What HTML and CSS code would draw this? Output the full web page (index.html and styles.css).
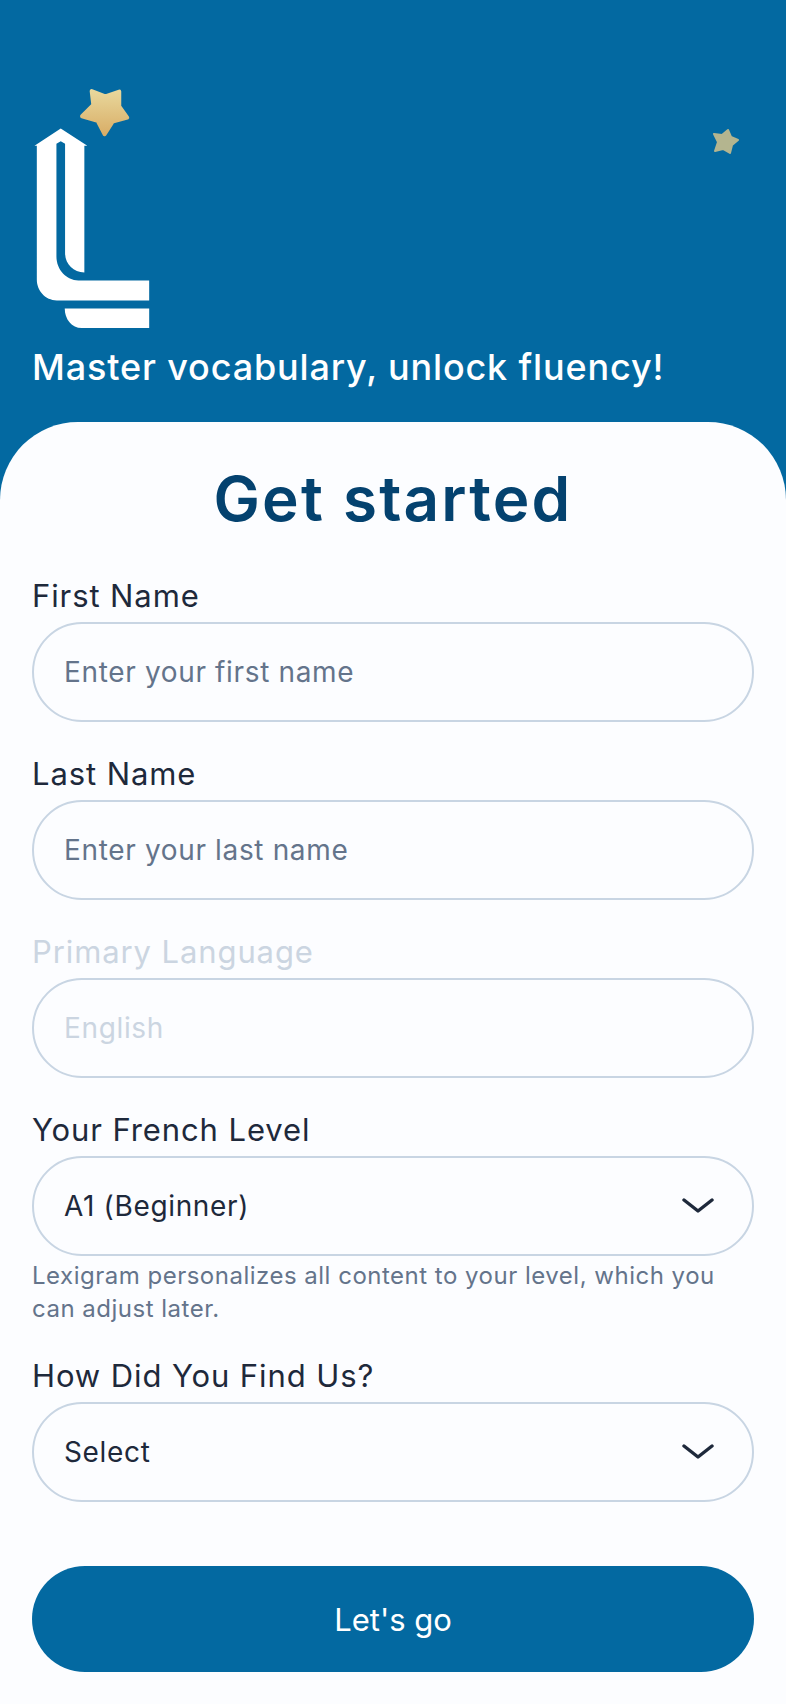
FILE: index.html
```html
<!DOCTYPE html>
<html lang="en">
<head>
  <meta charset="UTF-8" />
  <meta name="viewport" content="width=device-width, initial-scale=1.0"/>
  <title>Lexigram - Get started</title>
  <link rel="stylesheet" href="styles.css">
</head>
<body>

  <!-- Hero -->
  <header class="hero">
    <svg class="star-small" viewBox="0 0 30 30" aria-hidden="true">
      <path d="M17 3 L20 10 L27 13 L21 18 L19 26 L12 22 L4 24 L7 15 L3 7 L11 8 Z" fill="#b4b58f" stroke="#b4b58f" stroke-width="2" stroke-linejoin="round"/>
    </svg>
    <svg class="logo" viewBox="100 80 352 728" aria-hidden="true">
      <defs>
        <linearGradient id="gold" x1="0" y1="0" x2="0" y2="1">
          <stop offset="0" stop-color="#e8d79b"/>
          <stop offset="1" stop-color="#d9ae68"/>
        </linearGradient>
      </defs>
      <path d="M275 92 L316 108 L358 94 L358 138 L382 172 L338 184 L314 222 L293 182 L246 168 L280 134 Z" fill="url(#gold)" stroke="url(#gold)" stroke-width="12" stroke-linejoin="round"/>
      <path fill="#fff" d="M182 205 L262 257 H253 V638 C220 638 195 612 195 580 V251 L182 243 L169 251 V590 C169 630 200 662 235 662 H448 V722 H170 C135 722 110 692 110 660 V257 H103 Z"/>
      <path fill="#fff" d="M194 746 H448 V805 H245 C215 805 194 778 194 746 Z"/>
    </svg>
    <p class="tagline">Master vocabulary, unlock fluency!</p>
  </header>

  <!-- Sign up form -->
  <main class="sheet">
    <h1>Get started</h1>
    <form class="signup">
      <div class="field">
        <label for="firstName">First Name</label>
        <input id="firstName" type="text" placeholder="Enter your first name" />
      </div>
      <div class="field">
        <label for="lastName">Last Name</label>
        <input id="lastName" type="text" placeholder="Enter your last name" />
      </div>
      <div class="field is-disabled">
        <label for="language">Primary Language</label>
        <input id="language" type="text" value="English" disabled />
      </div>
      <div class="field">
        <label>Your French Level</label>
        <div class="select">
          <span>A1 (Beginner)</span>
          <svg viewBox="0 0 32 18" aria-hidden="true"><path d="M2 3 L16 14 L30 3"/></svg>
        </div>
        <p class="hint">Lexigram personalizes all content to your level, which you can adjust later.</p>
      </div>
      <div class="field">
        <label>How Did You Find Us?</label>
        <div class="select">
          <span>Select</span>
          <svg viewBox="0 0 32 18" aria-hidden="true"><path d="M2 3 L16 14 L30 3"/></svg>
        </div>
      </div>
      <button type="submit">Let's go</button>
    </form>
  </main>

</body>
</html>
```

FILE: styles.css
```css
* { box-sizing: border-box; }
html, body { margin: 0; }
body { font-family: "Inter", "Noto Sans", sans-serif; background: #0369a1; width: 786px; height: 1704px; overflow: hidden; }

.hero { position: relative; height: 422px; padding: 87px 32px 0; color: #fff; }
.logo { display: block; width: 118px; height: 242px; margin-left: 1px; }
.star-small { position: absolute; left: 711px; top: 127px; width: 30px; height: 30px; }
.tagline { margin: 17px 0 0; font-size: 36px; line-height: 42px; font-weight: 500; letter-spacing: 0.85px; white-space: nowrap; }

.sheet { height: 1282px; padding: 0 32px; background: #fcfdff; border-radius: 78px 78px 0 0; }
h1 { margin: 0; padding-top: 41px; height: 150px; text-align: center; color: #04426f; font-size: 62px; line-height: 72px; font-weight: 600; letter-spacing: 2.2px; }

.signup { display: flex; flex-direction: column; }
.field { display: flex; flex-direction: column; margin-bottom: 28px; }
.field label { height: 50px; padding-top: 6px; font-size: 31px; line-height: 36px; letter-spacing: 0.9px; color: #1e293b; }
.field input, .select { width: 100%; height: 100px; padding: 0 30px; border: 2px solid #c8d5e3; border-radius: 50px; background: transparent; font: inherit; font-size: 28px; letter-spacing: 0.65px; color: #1e293b; outline: none; }
.field input::placeholder { color: #64748b; opacity: 1; }
.is-disabled label { color: #cbd5e1; }
.field input:disabled { color: #cbd5e1; }
.select { display: flex; align-items: center; justify-content: space-between; }
.select svg { width: 32px; height: 18px; margin-right: 8px; }
.select path { fill: none; stroke: #1e293b; stroke-width: 3.4; stroke-linecap: round; stroke-linejoin: round; }
.hint { margin: 3px 0 0; height: 65px; font-size: 24px; line-height: 33px; letter-spacing: 0.5px; color: #64748b; }

button { margin-top: 36px; height: 106px; border: 0; border-radius: 53px; background: #0369a1; color: #fff; font: inherit; font-size: 31px; }
```
